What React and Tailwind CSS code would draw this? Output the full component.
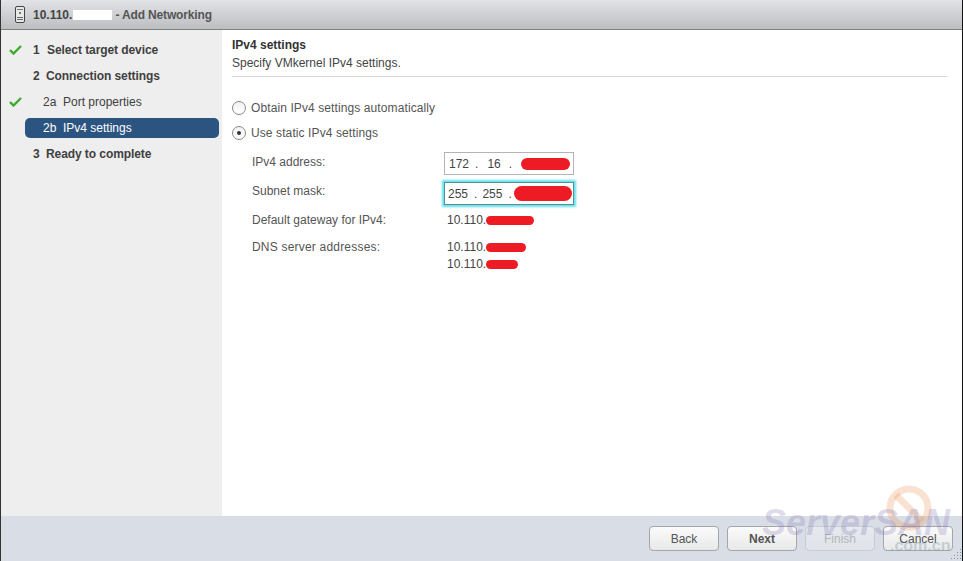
import React from 'react';

const Check = () => (
  <svg width="13" height="10" viewBox="0 0 13 10" className="shrink-0">
    <path d="M1 5 L4.5 8.5 L12 1" fill="none" stroke="#3cab2c" strokeWidth="2.4" />
  </svg>
);

const Step = ({ done, num, label, sub, active, gap }) => (
  <div className="relative h-[26px] flex items-center">
    {done && <span className="absolute left-[8px] top-[8px] flex"><Check /></span>}
    <div className={`ml-[24px] w-[194px] h-[20px] flex items-center rounded-[5px] ${active ? 'bg-[#2b5480] text-white' : 'text-[#404040]'} ${sub ? 'pl-[18px]' : 'pl-[8px] font-bold tracking-[-0.08px]'}`}>
      <span className={sub ? 'w-[20px]' : gap ? 'w-[14px]' : 'w-[13px]'}>{num}</span>
      <span>{label}</span>
    </div>
  </div>
);

const Radio = ({ checked, label }) => (
  <div className="h-[25px] flex items-center">
    <span className="w-[14px] h-[14px] rounded-full border border-[#8a8a8a] bg-gradient-to-b from-[#f2f2f2] to-white flex items-center justify-center mr-[5px]">
      {checked && <span className="w-[4px] h-[4px] rounded-full bg-[#333333]" />}
    </span>
    <span className="tracking-[0.1px] text-[#555555]">{label}</span>
  </div>
);

const Redact = ({ className }) => (
  <span className={`inline-block bg-[#ed1c24] rounded-full ${className}`} />
);

const FormRow = ({ label, h, children, labelClass = '' }) => (
  <div className={`flex ${h}`}>
    <div className={`w-[192px] shrink-0 text-[#555555] ${labelClass}`}>{label}</div>
    <div>{children}</div>
  </div>
);

const Btn = ({ children, bold, disabled }) => (
  <button className={`w-[70px] h-[25px] rounded-[4px] border text-[12px] bg-gradient-to-b ${disabled ? 'border-[#c6ccd3] text-[#b4b6ba] from-[#e6e9ee] to-[#dfe2e8]' : 'border-[#a3a6aa] text-[#555555] from-[#fbfbfb] to-[#e8e8e8]'} ${bold ? 'font-bold text-[#333333]' : ''}`}>
    {children}
  </button>
);

export default function App() {
  return (
    <div className="w-[963px] h-[561px] flex flex-col relative overflow-hidden bg-white border-l border-r border-l-[#333333] border-r-[#111111] text-[12px] text-[#444444] font-['Liberation_Sans',Arial,sans-serif]">
      {/* title bar */}
      <div className="h-[30px] shrink-0 flex items-center bg-gradient-to-b from-[#e2e3e6] to-[#bdbec1] border-b border-[#808080] pl-[14px]">
        <svg width="10" height="17" viewBox="0 0 10 17" className="mr-[8px]">
          <rect x="0.5" y="0.5" width="9" height="16" rx="1.5" fill="#e8e8e8" stroke="#444444" />
          <rect x="2" y="3" width="6" height="1" fill="#777777" />
          <rect x="4" y="6" width="2" height="2" fill="#777777" />
          <rect x="2" y="11" width="6" height="1" fill="#666666" />
          <rect x="2" y="13" width="6" height="1" fill="#666666" />
        </svg>
        <span className="font-bold text-[#444444]">10.110.</span>
        <span className="w-[39px] h-[10px] bg-white ml-[1px]" />
        <span className="font-bold text-[#555555] ml-[3px] tracking-[-0.15px]">- Add Networking</span>
      </div>

      <div className="flex flex-1 min-h-0">
        {/* wizard steps */}
        <div className="w-[221px] shrink-0 bg-[#eeeeee] pt-[7px]">
          <Step done gap num="1" label="Select target device" />
          <Step num="2" label="Connection settings" />
          <Step done sub num="2a" label="Port properties" />
          <Step active sub num="2b" label="IPv4 settings" />
          <Step num="3" label="Ready to complete" />
        </div>

        {/* content */}
        <div className="flex-1 pl-[10px] pr-[15px] pt-[8px]">
          <div className="font-bold text-[#333333] leading-[14px]">IPv4 settings</div>
          <div className="mt-[4px] leading-[14px] text-[#444444]">Specify VMkernel IPv4 settings.</div>
          <div className="mt-[6px] border-t border-[#d9d9d9]" />
          <div className="mt-[18px]">
            <Radio label="Obtain IPv4 settings automatically" />
            <Radio checked label="Use static IPv4 settings" />
          </div>
          <div className="mt-[8px] pl-[20px]">
            <FormRow label="IPv4 address:" h="h-[29px]">
              <div className="w-[130px] h-[23px] -mt-[1px] border border-[#b4b4b4] flex items-center pl-[4px]">
                <span>172</span><span className="ml-[6px]">.</span><span className="ml-[9px]">16</span><span className="ml-[8px]">.</span>
                <Redact className="ml-[9px] w-[49px] h-[12px]" />
              </div>
            </FormRow>
            <FormRow label="Subnet mask:" h="h-[29px]">
              <div className="w-[130px] h-[23px] border border-[#5a8f98] shadow-[0_0_2px_2px_#62e0ea] flex items-center pl-[3px]">
                <span>255</span><span className="ml-[6px]">.</span><span className="ml-[5px]">255</span><span className="ml-[6px]">.</span>
                <Redact className="ml-[2px] w-[58px] h-[15px]" />
              </div>
            </FormRow>
            <FormRow label="Default gateway for IPv4:" h="h-[27px]">
              <div className="flex items-center h-[18px] ml-[3px]"><span>10.110.</span><Redact className="w-[48px] h-[9px]" /></div>
            </FormRow>
            <FormRow label="DNS server addresses:" labelClass="tracking-[0.2px]">
              <div className="flex items-center h-[18px] ml-[3px]"><span>10.110.</span><Redact className="w-[40px] h-[9px]" /></div>
              <div className="flex items-center h-[18px] -mt-[1px] ml-[3px]"><span>10.110.</span><Redact className="w-[32px] h-[9px]" /></div>
            </FormRow>
          </div>
        </div>
      </div>

      {/* footer */}
      <div className="h-[45px] shrink-0 bg-[#d9dee6] flex items-center justify-end gap-[8px] pr-[9px]">
        <Btn>Back</Btn>
        <Btn bold>Next</Btn>
        <Btn disabled>Finish</Btn>
        <Btn>Cancel</Btn>
      </div>

      {/* watermark over the footer */}
      <svg width="56" height="56" viewBox="0 0 56 56" className="absolute left-[880px] top-[480px] pointer-events-none">
        <circle cx="28" cy="28" r="19" fill="none" stroke="#ec8a4a" strokeOpacity="0.25" strokeWidth="7" />
        <path d="M15 15 L41 41" stroke="#ec8a4a" strokeOpacity="0.25" strokeWidth="7" />
      </svg>
      <div className="absolute left-[761px] top-[501px] pointer-events-none text-[36px] leading-[44px] italic font-bold text-[#7d6fb0]/25">ServerSAN</div>
      <div className="absolute left-[889px] top-[537px] pointer-events-none text-[16px] leading-[18px] font-bold text-[#7d9cb0]/40">.com.cn</div>
      {/* resize grip */}
      <svg width="12" height="12" viewBox="0 0 12 12" className="absolute right-[0px] bottom-[1px]">
        <path d="M10 1h1v1h-1zM7 4h1v1H7zM10 4h1v1h-1zM4 7h1v1H4zM7 7h1v1H7zM10 7h1v1h-1zM1 10h1v1H1zM4 10h1v1H4zM7 10h1v1H7zM10 10h1v1h-1z" fill="#8b8f96" />
      </svg>
    </div>
  );
}
